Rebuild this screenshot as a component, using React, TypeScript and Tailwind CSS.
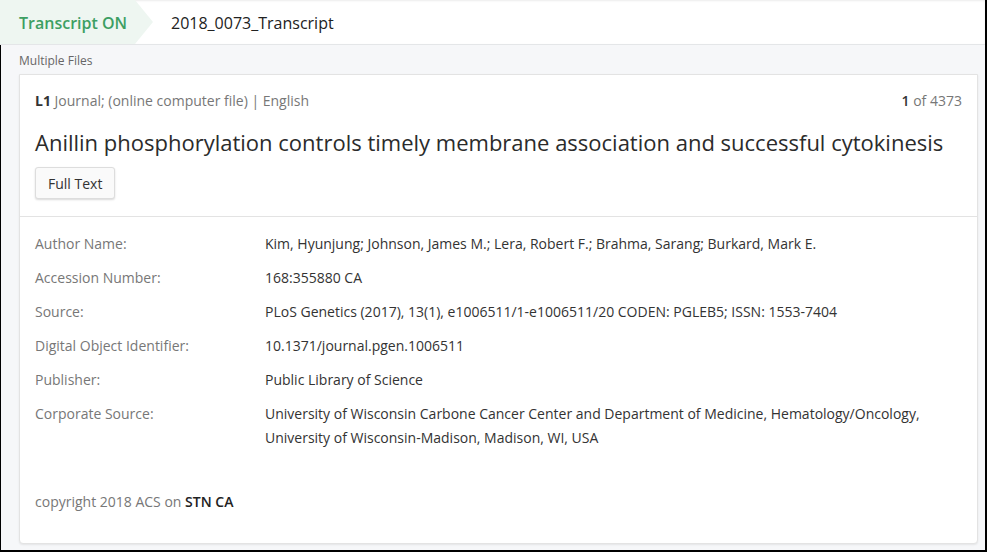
const ROWS: { label: string; value: string[] }[] = [
  { label: "Author Name:", value: ["Kim, Hyunjung; Johnson, James M.; Lera, Robert F.; Brahma, Sarang; Burkard, Mark E."] },
  { label: "Accession Number:", value: ["168:355880 CA"] },
  { label: "Source:", value: ["PLoS Genetics (2017), 13(1), e1006511/1-e1006511/20 CODEN: PGLEB5; ISSN: 1553-7404"] },
  { label: "Digital Object Identifier:", value: ["10.1371/journal.pgen.1006511"] },
  { label: "Publisher:", value: ["Public Library of Science"] },
  {
    label: "Corporate Source:",
    value: [
      "University of Wisconsin Carbone Cancer Center and Department of Medicine, Hematology/Oncology,",
      "University of Wisconsin-Madison, Madison, WI, USA",
    ],
  },
];

export default function App() {
  return (
    <div className="w-[987px] h-[552px] overflow-hidden bg-white border-r-2 border-b-2 border-black font-['Open_Sans',sans-serif] text-[#333]">
      {/* header */}
      <div className="h-[45px] flex items-center border-b border-[#e4e6e8] shadow-[inset_0_1px_2px_rgba(0,0,0,0.08)]">
        <div className="h-full w-[153px] flex items-center pl-[19px] pt-[2px] bg-[#eef6f1] [clip-path:polygon(0_0,135px_0,153px_50%,135px_100%,0_100%)]">
          <span className="text-[16px] font-semibold text-[#3d9f63]">Transcript ON</span>
        </div>
        <span className="ml-[18px] pt-[2px] text-[16px] text-[#222]">2018_0073_Transcript</span>
      </div>

      <div className="h-[507px] bg-[#f6f7f9] border-l border-black">
        <div className="h-[29px] flex items-center pl-[18px] pt-[2px] text-[12px] text-[#666]">Multiple Files</div>

        {/* card */}
        <div className="ml-[18px] mr-[7px] h-[470px] bg-white border border-[#e3e3e3] rounded-b-[4px] shadow-[0_1px_2px_rgba(0,0,0,0.08)]">
          <div className="px-[15px] pt-[16px] pb-[17px] border-b border-[#e3e3e3]">
            <div className="flex justify-between text-[14px] text-[#777] leading-[20px]">
              <span>
                <b className="font-bold text-[#333]">L1</b> Journal; (online computer file) | English
              </span>
              <span>
                <b className="font-semibold text-[#333]">1</b> of 4373
              </span>
            </div>
            <h1 className="mt-[16px] text-[22px] leading-[30px] text-[#2b2b2b]">
              Anillin phosphorylation controls timely membrane association and successful cytokinesis
            </h1>
            <button className="mt-[10px] h-[32px] px-[12px] text-[14px] text-[#333] bg-[#fafafa] border border-[#ddd] rounded-[3px] shadow-[0_1px_2px_rgba(0,0,0,0.15)]">
              Full Text
            </button>
          </div>

          <div className="px-[15px] pt-[15px]">
            {ROWS.map((r) => (
              <div key={r.label} className="flex text-[14px] leading-[24px] mb-[10px]">
                <div className="w-[230px] shrink-0 text-[#777]">{r.label}</div>
                <div className="text-[#333]">
                  {r.value.map((v) => (
                    <div key={v}>{v}</div>
                  ))}
                </div>
              </div>
            ))}
            <div className="mt-[41px] text-[14px] text-[#777]">
              copyright 2018 ACS on <b className="font-semibold text-[#222]">STN CA</b>
            </div>
          </div>
        </div>
      </div>
    </div>
  );
}
